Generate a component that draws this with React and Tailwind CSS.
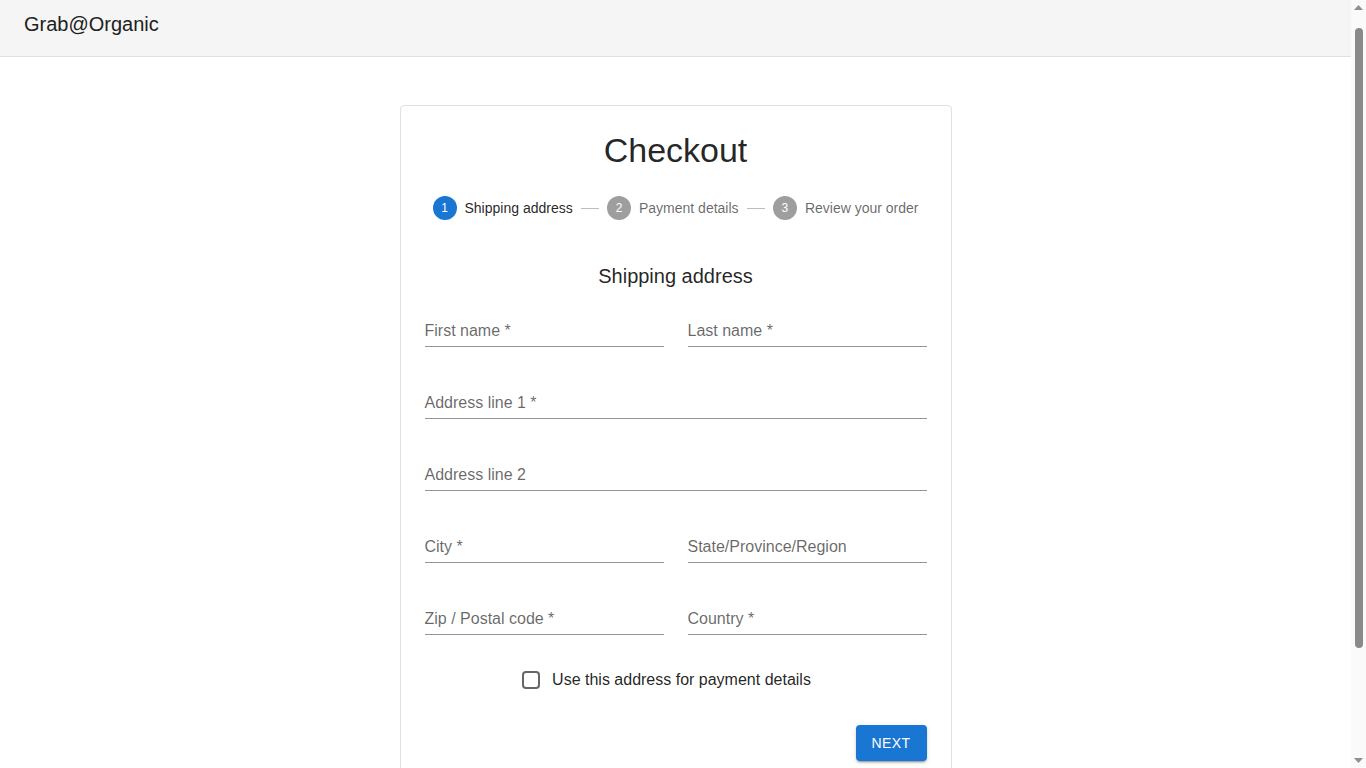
import { Fragment } from 'react';

const FONT = { fontFamily: '"Liberation Sans", Arial, sans-serif' };

const steps = ['Shipping address', 'Payment details', 'Review your order'];

function Stepper({ active = 0 }) {
  return (
    <div className="flex items-center">
      {steps.map((label, i) => (
        <Fragment key={label}>
          {i > 0 && <div className="flex-1 h-px bg-[#bdbdbd]" />}
          <div className="flex items-center px-2">
            <span
              className={`w-6 h-6 rounded-full flex items-center justify-center text-xs text-white ${
                i === active ? 'bg-[#1976d2]' : 'bg-[#9e9e9e]'
              }`}
            >
              {i + 1}
            </span>
            <span
              className={`pl-2 text-sm whitespace-nowrap ${
                i === active ? 'text-black/[0.87]' : 'text-black/60'
              }`}
            >
              {label}
            </span>
          </div>
        </Fragment>
      ))}
    </div>
  );
}

function Field({ label, required }) {
  return (
    <div className="h-12 flex flex-col justify-end border-b border-black/[0.42]">
      <span className="text-base leading-[23px] pb-1 text-black/60">
        {label}
        {required && ' *'}
      </span>
    </div>
  );
}

// window scrollbar as seen in the screenshot
function Scrollbar() {
  return (
    <div className="w-[15px] shrink-0 bg-[#fafafa] flex flex-col items-center">
      <svg width="9" height="5" viewBox="0 0 9 5" className="mt-[5px]">
        <path d="M0 5 L4.5 0 L9 5 Z" fill="#8f8f8f" />
      </svg>
      <div className="mt-[18px] w-[8px] h-[620px] rounded-full bg-[#8a8a8a] ml-px" />
      <div className="flex-1" />
      <svg width="9" height="5" viewBox="0 0 9 5" className="mb-[5px]">
        <path d="M0 0 L9 0 L4.5 5 Z" fill="#8f8f8f" />
      </svg>
    </div>
  );
}

export default function App() {
  return (
    <div className="h-screen flex bg-white text-black/[0.87]" style={FONT}>
      <div className="flex-1 min-w-0 overflow-hidden">
        <div className="min-h-[909px]">
          {/* Top bar */}
          <header className="h-[57px] bg-[#f5f5f5] border-b border-[#e0e0e0] px-6 pt-2">
            <span className="text-xl leading-8 text-[#212121]">Grab@Organic</span>
          </header>

          {/* Checkout card */}
          <main className="flex flex-col items-center">
            <section className="w-[552px] mt-12 border border-[#e0e0e0] rounded px-6 pt-[23px] pb-6">
              <h1 className="text-[34px] leading-[42px] text-center">Checkout</h1>

              <div className="pt-[25px] pb-10">
                <Stepper active={0} />
              </div>

              <h2 className="text-xl leading-8 text-center mb-[7px]">Shipping address</h2>

              <div className="grid grid-cols-2 gap-x-6 gap-y-6">
                <Field label="First name" required />
                <Field label="Last name" required />
                <div className="col-span-2">
                  <Field label="Address line 1" required />
                </div>
                <div className="col-span-2">
                  <Field label="Address line 2" />
                </div>
                <Field label="City" required />
                <Field label="State/Province/Region" />
                <Field label="Zip / Postal code" required />
                <Field label="Country" required />

                {/* Checkbox */}
                <div className="col-span-2 flex justify-center">
                  <label className="-ml-[11px] mr-4 h-[42px] pl-[9px] flex items-center gap-3 cursor-pointer">
                    <span className="w-[18px] h-[18px] rounded-sm border-2 border-black/60" />
                    <span className="text-base">Use this address for payment details</span>
                  </label>
                </div>
              </div>

              <div className="flex justify-end mt-6">
                <button className="h-9 px-4 rounded bg-[#1976d2] text-white text-sm font-medium tracking-[0.4px] shadow-[0_3px_1px_-2px_rgba(0,0,0,0.2),0_2px_2px_0_rgba(0,0,0,0.14),0_1px_5px_0_rgba(0,0,0,0.12)]">
                  NEXT
                </button>
              </div>
            </section>

            <p className="mt-12 text-sm text-black/60">Copyright © Grab@Organic 2024.</p>
          </main>
        </div>
      </div>
      <Scrollbar />
    </div>
  );
}
